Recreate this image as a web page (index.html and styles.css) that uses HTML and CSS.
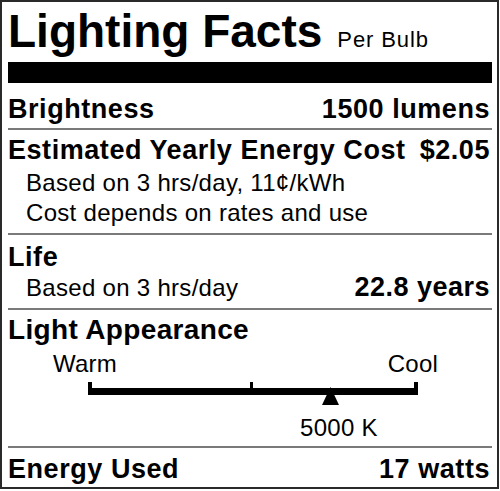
FILE: index.html
```html
<!DOCTYPE html>
<html lang="en">
<head>
<meta charset="utf-8">
<title>Lighting Facts</title>
<link rel="stylesheet" href="styles.css">
</head>
<body>
<div class="label">
  <div class="title-row">
    <span class="title">Lighting Facts</span>
    <span class="per">Per Bulb</span>
  </div>
  <div class="thick-bar"></div>

  <div class="row head gap-11">
    <span>Brightness</span>
    <span>1500 lumens</span>
  </div>
  <div class="rule gap-4"></div>

  <div class="row head gap-5">
    <span>Estimated Yearly Energy Cost</span>
    <span>$2.05</span>
  </div>
  <div class="row sub gap-3">
    <span>Based on 3 hrs/day, 11¢/kWh</span>
  </div>
  <div class="row sub">
    <span>Cost depends on rates and use</span>
  </div>
  <div class="rule gap-5"></div>

  <div class="row head gap-7">
    <span>Life</span>
  </div>
  <div class="row sub">
    <span>Based on 3 hrs/day</span>
    <span class="strong">22.8 years</span>
  </div>
  <div class="rule gap-6"></div>

  <div class="row big gap-4">
    <span>Light Appearance</span>
  </div>
  <div class="row ends gap-3">
    <span>Warm</span>
    <span>Cool</span>
  </div>
  <svg class="scale" width="484" height="24" viewBox="0 0 484 24" aria-hidden="true">
    <rect x="80" y="6" width="330" height="7" fill="#000"/>
    <rect x="80" y="0" width="4" height="13" fill="#000"/>
    <rect x="242" y="0" width="3" height="13" fill="#000"/>
    <rect x="406" y="0" width="4" height="13" fill="#000"/>
    <polygon points="322.5,5 331,23 314,23" fill="#000"/>
  </svg>
  <div class="row kelvin gap-7">
    <span>5000 K</span>
  </div>
  <div class="rule gap-3"></div>

  <div class="row head gap-6">
    <span>Energy Used</span>
    <span>17 watts</span>
  </div>
</div>
</body>
</html>
```

FILE: styles.css
```css
* {
  box-sizing: border-box;
}

html, body {
  margin: 0;
  padding: 0;
  background: #fff;
}

body {
  font-family: "Liberation Sans", Arial, sans-serif;
  color: #000;
}

.label {
  width: 499px;
  border: 2px solid #2a2a2a;
  padding: 6px 5px 3px 6px;
  display: flex;
  flex-direction: column;
}

.title-row {
  display: flex;
  align-items: baseline;
  height: 46px;
}

.title {
  font-weight: bold;
  font-size: 46px;
  line-height: 46px;
}

.per {
  font-size: 22px;
  line-height: 46px;
  margin-left: 15px;
  letter-spacing: 0.9px;
}

.thick-bar {
  height: 21px;
  background: #000;
  margin-top: 8px;
}

.rule {
  height: 2px;
  background: #7a7a7a;
}

.row {
  display: flex;
  justify-content: space-between;
  align-items: baseline;
  height: 30px;
  padding-right: 2px;
  line-height: 30px;
  white-space: nowrap;
}

.head {
  font-weight: bold;
  font-size: 27px;
  letter-spacing: 0.55px;
}

.sub {
  font-size: 24px;
  padding-left: 18px;
  letter-spacing: 0.3px;
}

.sub .strong {
  font-weight: bold;
  font-size: 27px;
  letter-spacing: 0.5px;
}

.big {
  font-weight: bold;
  font-size: 28px;
  height: 32px;
  line-height: 32px;
  letter-spacing: 0.35px;
}

.ends {
  font-size: 24px;
  padding-left: 45px;
  padding-right: 54px;
  letter-spacing: 0.2px;
}

.scale {
  display: block;
  margin-top: 3px;
}

.kelvin {
  font-size: 24px;
  padding-left: 292px;
  letter-spacing: 0.3px;
}

.gap-3 { margin-top: 3px; }
.gap-4 { margin-top: 4px; }
.gap-5 { margin-top: 5px; }
.gap-6 { margin-top: 6px; }
.gap-7 { margin-top: 7px; }
.gap-11 { margin-top: 11px; }
```
